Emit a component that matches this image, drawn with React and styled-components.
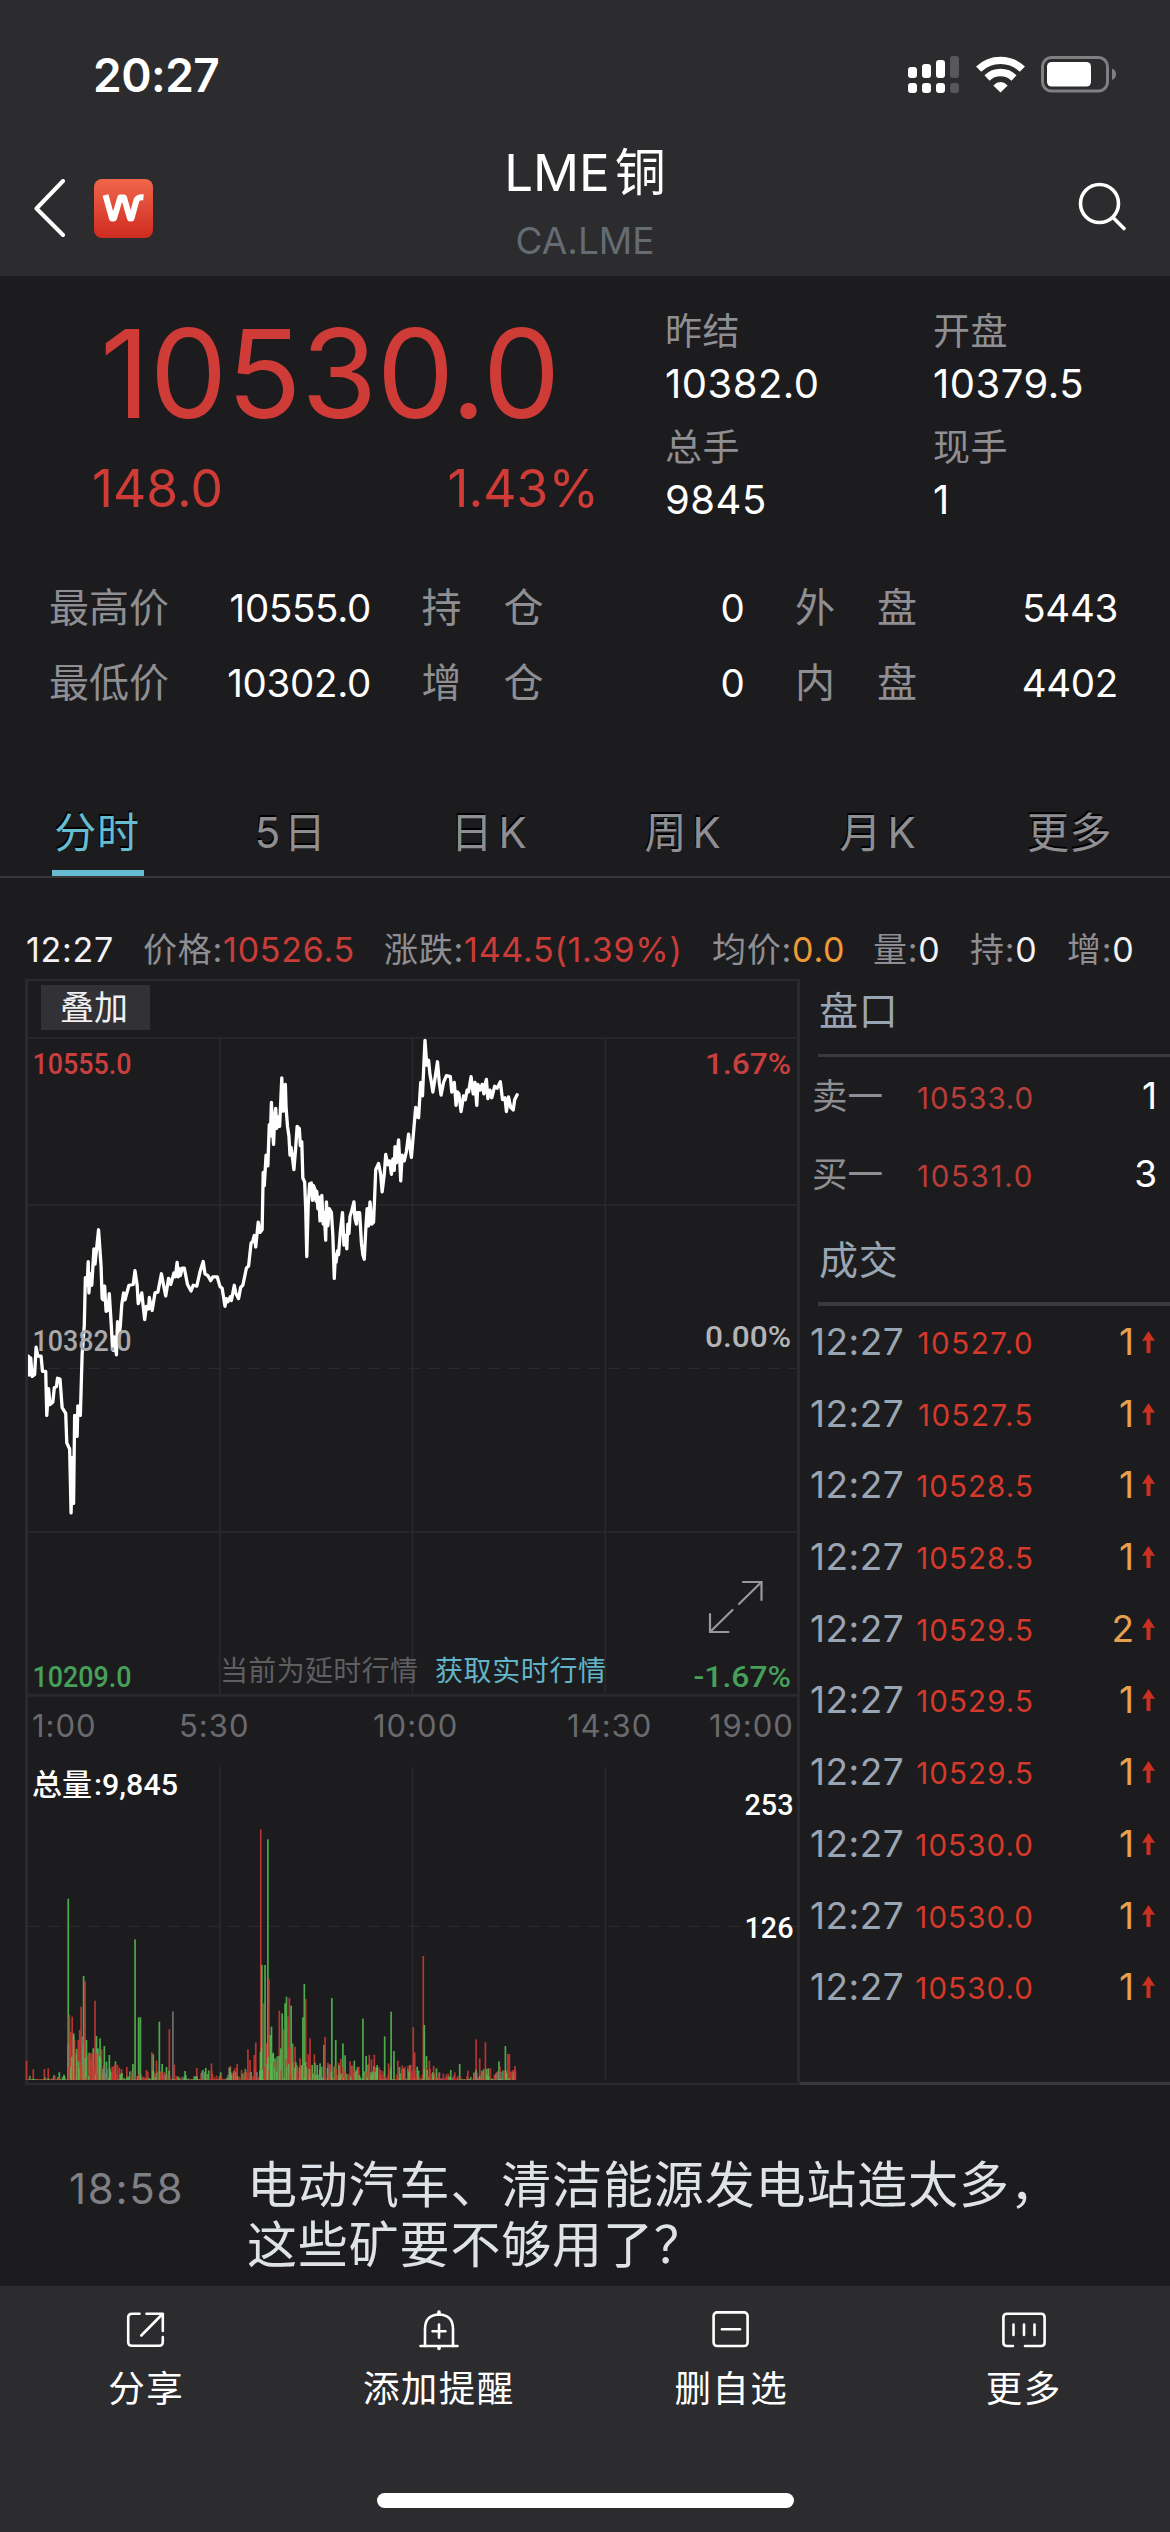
import React from 'react';
import styled, { createGlobalStyle } from 'styled-components';

const GlobalStyle = createGlobalStyle`
  * { box-sizing: border-box; }
  body {
    margin: 0;
    background: #1c1c1e;
    font-family: Inter, "Noto Sans CJK SC", sans-serif;
    color: #fff;
  }
  svg { display: block; }
`;

const C = {
  red: '#cf3b36',
  grey: '#8e8e93',
  dim: '#6a6a6e',
  teal: '#66bcd0',
  slate: '#9aa5b4',
  green: '#46a05a',
  grid: '#29292f',
  bar: '#2c2c2e',
};

const Screen = styled.div`
  width: 1170px;
  height: 2532px;
  overflow: hidden;
  background: #1c1c1e;
  display: flex;
  flex-direction: column;
  white-space: nowrap;
`;

/* ---------- header ---------- */
const Header = styled.header`
  flex: none;
  height: 276px;
  background: ${C.bar};
`;
const StatusBar = styled.div`
  height: 130px;
  padding: 19px 53px 0 93px;
  display: flex;
  align-items: center;
  justify-content: space-between;
`;
const Clock = styled.time`
  font-size: 46px;
  font-weight: 600;
  line-height: 60px;
  letter-spacing: -0.5px;
`;
const StatusIcons = styled.div`
  display: flex;
  align-items: center;
  gap: 16px;
`;
const NavBar = styled.div`
  height: 146px;
  padding: 0 42px 0 34px;
  display: grid;
  grid-template-columns: 300px 1fr 292px;
`;
const NavLeft = styled.div`
  display: flex;
  align-items: center;
  padding-top: 9px;
  gap: 28px;
`;
const NavRight = styled.div`
  display: flex;
  align-items: center;
  justify-content: flex-end;
  padding-top: 6px;
`;
const NavTitle = styled.div`
  padding-top: 12px;
  text-align: center;
`;
const Title = styled.h1`
  margin: 0;
  display: flex;
  justify-content: center;
  gap: 5px;
  font-size: 51px;
  font-weight: 400;
  line-height: 61px;
`;
const Code = styled.div`
  font-size: 37px;
  line-height: 75px;
  color: #656b73;
`;

/* ---------- quote ---------- */
const Quote = styled.section`
  flex: none;
  height: 294px;
  display: grid;
  grid-template-columns: 665px 268px 1fr;
`;
const PriceBlock = styled.div`
  padding: 36px 66px 0 92px;
  color: ${C.red};
`;
const Price = styled.div`
  padding-left: 8px;
  font-size: 123px;
  line-height: 124px;
  letter-spacing: -0.4px;
`;
const Change = styled.div`
  display: flex;
  justify-content: space-between;
  font-size: 51.5px;
  line-height: 105px;
`;
const FigureColumn = styled.dl`
  margin: 0;
  padding-top: 29px;
`;
const Figure = styled.div`
  height: 115.5px;
`;
const FigureLabel = styled.dt`
  font-size: 37px;
  line-height: 53px;
  height: 52px;
  letter-spacing: 0.5px;
  color: ${C.grey};
`;
const FigureValue = styled.dd`
  margin: 0;
  font-size: 40px;
  line-height: 54px;
  letter-spacing: 0.5px;
`;
const Stats = styled.section`
  flex: none;
  height: 150px;
  padding: 0 52px 0 49px;
  display: grid;
  grid-template-columns: 322px 323px 323px;
  justify-content: space-between;
  grid-auto-rows: 75px;
`;
const Stat = styled.div`
  display: flex;
  justify-content: space-between;
  align-items: center;
`;
const StatLabel = styled.span`
  display: flex;
  gap: ${(p) => (p.$wide ? 42 : 1)}px;
  font-size: 40px;
  line-height: 72px;
  color: ${C.grey};
`;
const StatValue = styled.span`
  font-size: 38.5px;
  line-height: 78px;
  letter-spacing: -0.3px;
`;

/* ---------- tabs ---------- */
const Tabs = styled.nav`
  flex: none;
  height: 90px;
  margin-top: 68px;
  display: grid;
  grid-template-columns: repeat(6, 195px);
  border-bottom: 2px solid #38383b;
`;
const Tab = styled.div`
  display: flex;
  justify-content: center;
  padding-top: 6px;
  font-size: 42px;
  line-height: 77px;
  letter-spacing: ${(p) => p.$spacing}px;
  color: ${(p) => (p.$active ? C.teal : C.grey)};
  text-shadow: -1px -2px 0 #000;
`;
const TabText = styled.span`
  height: 82px;
  margin-left: ${(p) => p.$inset}px;
  padding: 0 4px 0 2px;
  border-bottom: 6px solid ${(p) => (p.$active ? C.teal : 'transparent')};
`;

/* ---------- readout ---------- */
const Readout = styled.div`
  flex: none;
  height: 101px;
  padding: 42px 0 0 26px;
  display: grid;
  grid-template-columns: 117px 241px 328px 161px 97px 97px auto;
  font-size: 34px;
  line-height: 59px;
  letter-spacing: 0.75px;
  color: ${C.grey};
`;
const ReadoutValue = styled.span`
  color: ${(p) => p.$color || '#f2f2f4'};
`;

/* ---------- chart + depth ---------- */
const Market = styled.section`
  flex: none;
  height: 1105px;
  display: grid;
  grid-template-columns: 800px 1fr;
`;
const ChartPanel = styled.div`
  margin-left: 25px;
  border: 3px solid ${C.grid};
  border-top-width: 2px;
  border-bottom-width: 2px;
`;
const OverlayBar = styled.div`
  height: 56px;
  padding: 4px 0 0 13px;
`;
const OverlayButton = styled.button`
  display: block;
  width: 109px;
  height: 45px;
  padding: 0 3px 0 0;
  border: 0;
  background: #313136;
  color: #f0f0f2;
  font: inherit;
  font-size: 34px;
  line-height: 43px;
  text-align: center;
`;
const TimeAxis = styled.div`
  height: 69px;
  padding-left: 4px;
  display: grid;
  grid-template-columns: 147px 194px 194px 142px auto;
  font-size: 31px;
  line-height: 58px;
  letter-spacing: 1px;
  color: ${C.dim};
`;
const Depth = styled.aside`
  border-bottom: 3px solid #3a3a3c;
`;
const DepthTitle = styled.h2`
  margin: 0 0 0 18px;
  padding-left: 1px;
  height: ${(p) => p.$height}px;
  border-bottom: ${(p) => p.$rule}px solid #3a3a3c;
  font-size: 39px;
  font-weight: 400;
  line-height: ${(p) => p.$line}px;
  letter-spacing: 0.8px;
  color: ${C.slate};
`;
const OrderRow = styled.div`
  height: 78px;
  padding: 0 13px 0 12px;
  display: grid;
  grid-template-columns: 82px 140px 1fr;
  line-height: 78px;
`;
const OrderSide = styled.span`
  font-size: 35.5px;
  line-height: 80px;
  color: ${C.grey};
`;
const DepthPrice = styled.span`
  font-size: 29.5px;
  line-height: inherit;
  padding-top: ${(p) => p.$drop}px;
  text-align: right;
  letter-spacing: ${(p) => p.$spacing}px;
  color: ${(p) => p.$color};
`;
const OrderQty = styled.span`
  font-size: 37px;
  text-align: right;
`;
const TradeRow = styled.div`
  height: 71.7px;
  padding: 0 15px 0 10px;
  display: grid;
  grid-template-columns: 94px 130px 1fr 13px;
  line-height: 71px;
`;
const TradeTime = styled.span`
  font-size: 37px;
  letter-spacing: 0.5px;
  color: ${C.slate};
`;
const TradeQty = styled.span`
  padding-right: 8px;
  font-size: 37px;
  text-align: right;
  color: #e8a04e;
`;
const ArrowSlot = styled.span`
  display: flex;
  align-items: center;
`;

/* ---------- news + actions ---------- */
const News = styled.article`
  flex: 1;
  padding: 72px 0 0 69px;
  display: grid;
  grid-template-columns: 178px 1fr;
  align-items: start;
`;
const NewsTime = styled.time`
  font-size: 42px;
  line-height: 66px;
  letter-spacing: 1.7px;
  color: #7f7f84;
`;
const NewsTitle = styled.p`
  margin: 0;
  font-size: 50px;
  line-height: 59.5px;
  letter-spacing: 0.85px;
  color: #dfe2e6;
`;
const Actions = styled.footer`
  flex: none;
  height: 246px;
  background: ${C.bar};
  display: flex;
  flex-direction: column;
  align-items: center;
`;
const ActionRow = styled.div`
  width: 100%;
  height: 207px;
  display: flex;
`;
const Action = styled.div`
  flex: 1;
  padding-top: 20px;
  display: flex;
  flex-direction: column;
  align-items: center;
  font-size: 36.5px;
  line-height: 71px;
  letter-spacing: 1.4px;
`;
const HomeIndicator = styled.div`
  width: 417px;
  height: 15px;
  border-radius: 8px;
  background: #fff;
`;

/* ---------- icons ---------- */
const SignalIcon = () => (
  <svg width="52" height="38" viewBox="0 0 52 38" fill="#fff">
    {[[0, 11], [14, 8], [28, 4]].map(([x, y]) => (
      <g key={x}>
        <rect x={x} y={y} width="9" height={22 - y} rx="3" />
        <rect x={x} y="27" width="9" height="10" rx="3" />
      </g>
    ))}
    <g fill="#58585a">
      <rect x="42" y="0" width="9" height="22" rx="3" />
      <rect x="42" y="27" width="9" height="10" rx="3" />
    </g>
  </svg>
);
const WifiIcon = () => (
  <svg width="49" height="37" viewBox="0 0 49 37">
    <g fill="none" stroke="#fff" strokeWidth="7.4">
      <path d="M2.6 13.2 A31.5 31.5 0 0 1 46.4 13.2" />
      <path d="M11 22 A19.5 19.5 0 0 1 38 22" />
    </g>
    <path d="M24.5 36.5 L17.3 29.4 Q24.5 22.6 31.7 29.4 Z" fill="#fff" />
  </svg>
);
const BatteryIcon = () => (
  <svg width="76" height="37" viewBox="0 0 76 37">
    <rect x="1.5" y="1.5" width="65" height="33.5" rx="9" fill="none" stroke="#808082" strokeWidth="3" />
    <rect x="6" y="6" width="44" height="24.5" rx="4.5" fill="#fff" />
    <path d="M71 12.5 Q75 14 75 18.3 Q75 22.5 71 24 Z" fill="#808082" />
  </svg>
);
const BackIcon = () => (
  <svg width="31" height="60" viewBox="0 0 31 60" fill="none" stroke="#fff" strokeWidth="4" strokeLinecap="round" strokeLinejoin="round">
    <path d="M29 2 L2.5 29.5 L29 56" />
  </svg>
);
const AppLogo = () => (
  <svg width="60" height="60" viewBox="0 0 60 60">
    <defs>
      <linearGradient id="logoFill" x1="0" y1="0" x2="0" y2="1">
        <stop offset="0" stopColor="#f0674b" />
        <stop offset="1" stopColor="#cf2b20" />
      </linearGradient>
    </defs>
    <rect x="1" y="0" width="59" height="59" rx="8" fill="url(#logoFill)" />
    <path d="M12.5 16 L19 39.5 L21 39.5 L27.3 18.5 L31 18.5 L37 39.5 L38.5 39.5 L43.5 21 Q44.8 17.8 50.5 18.2" fill="none" stroke="#fff" strokeWidth="6" strokeLinejoin="round" />
  </svg>
);
const SearchIcon = () => (
  <svg width="50" height="50" viewBox="0 0 50 50" fill="none" stroke="#fff" strokeWidth="3.6" strokeLinecap="round">
    <circle cx="21.5" cy="21.5" r="19" />
    <path d="M35.5 36 L46 46.5" />
  </svg>
);
const ExpandIcon = () => (
  <g fill="none" stroke="#99999b" strokeWidth="2.2" strokeLinecap="round">
    <path d="M743 1582 H761.5 V1600" />
    <path d="M761 1582.5 L739 1604" />
    <path d="M710 1614 V1632 H728.5" />
    <path d="M710.5 1631.5 L732.5 1610" />
  </g>
);
const UpArrow = () => (
  <svg width="13" height="23" viewBox="0 0 13 23" fill="#cc301f">
    <path d="M6.5 0 L13 10 L8.5 9.4 V22 H4.5 V9.4 L0 10 Z" />
  </svg>
);

const actionStroke = { fill: 'none', stroke: '#fff', strokeWidth: 2.6, strokeLinecap: 'round', strokeLinejoin: 'round' };
const ShareIcon = () => (
  <svg width="44" height="48" viewBox="0 0 44 48" {...actionStroke}>
    <path d="M15.5 7.7 H8 Q4.2 7.7 4.2 11.5 V36 Q4.2 39.8 8 39.8 H35 Q38.8 39.8 38.8 36 V31" />
    <path d="M22.5 7.7 H38.8 V25" />
    <path d="M38 8.5 L17.3 29.5" />
  </svg>
);
const BellIcon = () => (
  <svg width="44" height="48" viewBox="0 0 44 48" {...actionStroke}>
    <path d="M3.5 40 H40.5" />
    <path d="M8 40 V23 Q8 9 22 8.5 Q36 9 36 23 V40" />
    <path d="M22 8 V6 M22 41 V42.5" strokeWidth="3.6" />
    <path d="M15.5 25.3 H28.5 M22 18.5 V31.8" />
  </svg>
);
const RemoveIcon = () => (
  <svg width="44" height="48" viewBox="0 0 44 48" {...actionStroke}>
    <rect x="4.6" y="6.4" width="34" height="33.6" rx="3.5" />
    <path d="M13 23.3 H31" />
  </svg>
);
const MoreIcon = () => (
  <svg width="48" height="48" viewBox="0 0 48 48" {...actionStroke}>
    <path d="M13 40 H7 Q3.4 40 3.4 36.5 V11.3 Q3.4 7.8 7 7.8 H41 Q44.6 7.8 44.6 11.3 V36.5 Q44.6 40 41 40 H25" />
    <path d="M13.5 18.5 V29 M24 18.5 V29 M34.5 18.5 V29" />
  </svg>
);

/* ---------- chart data ---------- */
const PRICE_LINE = `80,1035 82,1085 86,1040 90,1088 97,1083 101,1012 106,1035 115,1035 119,1075 128,1075 131,1190 136,1120 140,1162 148,1155 152,1118 158,1115 161,1093 168,1095 174,1170 184,1185 187,1262 195,1278 199,1445 203,1300 206,1420 209,1190 216,1245 218,1165 225,1190 230,1030 236,955 239,830 244,850 247,788 249,870 253,820 257,850 263,755 266,795 276,705 283,800 286,885 289,888 293,852 297,918 303,915 306,872 312,960 315,1015 317,1020 320,985 326,1032 329,945 333,985 337,955 341,900 346,870 350,888 361,850 373,848 378,812 384,850 387,898 397,870 405,940 410,905 416,912 418,882 426,916 434,870 442,868 452,820 458,850 464,878 472,832 478,848 487,818 491,828 496,790 499,828 501,805 505,825 510,805 516,805 525,848 535,865 541,850 551,852 560,815 569,788 574,820 582,825 590,838 596,828 608,828 616,853 622,858 630,905 634,885 638,893 645,880 648,890 656,850 660,870 668,885 674,855 680,850 690,805 696,800 703,740 708,735 712,720 716,750 723,685 728,712 734,705 737,555 740,590 745,510 750,538 754,430 757,460 760,372 763,440 766,482 769,410 772,388 775,440 779,410 783,435 789,308 793,395 796,330 799,325 801,385 805,435 809,460 812,510 815,490 818,510 823,548 828,490 832,435 838,440 841,485 845,475 848,570 853,580 856,650 859,775 863,640 867,585 872,583 875,628 878,590 882,600 885,630 887,605 890,650 893,620 896,682 901,615 905,690 908,660 912,732 914,632 918,695 922,650 928,660 932,720 936,832 939,770 941,790 945,760 948,770 953,710 959,660 963,745 967,720 971,755 974,690 977,715 980,670 985,655 991,632 994,675 998,690 1000,660 1007,660 1012,740 1016,770 1020,782 1025,690 1028,650 1032,695 1036,632 1041,690 1046,685 1049,620 1052,548 1060,532 1066,560 1070,606 1076,560 1080,508 1086,535 1091,525 1096,560 1100,520 1104,550 1106,488 1110,530 1116,470 1119,520 1122,577 1126,510 1132,525 1138,500 1144,455 1148,490 1152,516 1157,460 1164,385 1168,410 1172,412 1178,320 1183,355 1187,270 1190,210 1195,275 1200,262 1204,300 1208,320 1212,345 1218,310 1225,266 1230,320 1235,353 1242,320 1250,302 1261,305 1265,345 1272,320 1277,380 1281,345 1285,350 1291,396 1298,355 1303,365 1308,340 1312,345 1319,305 1325,350 1330,320 1335,380 1338,325 1344,340 1350,325 1355,350 1358,325 1362,312 1366,362 1372,340 1377,360 1385,330 1392,335 1401,318 1407,365 1414,360 1418,396 1424,358 1430,385 1437,392 1441,365 1448,352`;

const VOLUME = [
  [74, 1262, 'r'], [93, 1288, 'r'], [124, 1287, 'r'], [135, 1285, 'r'], [166, 1297, 'g'], [179, 1304, 'g'],
  [191, 776, 'g'], [194, 1125, 'r'], [198, 1175, 'r'], [202, 1130, 'r'], [206, 1180, 'g'], [214, 1240, 'n'],
  [219, 1200, 'r'], [223, 1170, 'r'], [227, 1100, 'r'], [230, 1190, 'n'], [234, 1008, 'g'], [238, 1024, 'r'], [242, 1200, 'g'],
  [250, 1238, 'g'], [256, 1240, 'r'], [261, 1225, 'g'], [266, 1082, 'r'], [270, 1188, 'g'], [274, 1225, 'g'], [280, 1195, 'g'],
  [284, 1228, 'r'], [292, 1218, 'g'], [298, 1265, 'g'], [306, 1245, 'g'], [314, 1280, 'r'], [323, 1264, 'g'], [334, 1283, 'r'],
  [340, 1288, 'r'], [355, 1281, 'r'], [372, 1272, 'g'], [378, 898, 'g'], [388, 1132, 'g'], [393, 1132, 'g'], [410, 1290, 'r'],
  [425, 1237, 'r'], [429, 1243, 'g'], [438, 1262, 'r'], [446, 1145, 'g'], [454, 1272, 'g'], [466, 1281, 'g'], [474, 1168, 'r'],
  [484, 1114, 'n'], [488, 1274, 'r'], [518, 1293, 'g'], [551, 1284, 'r'], [568, 1290, 'g'], [576, 1284, 'g'], [592, 1270, 'r'],
  [618, 1297, 'g'], [645, 1278, 'r'], [664, 1272, 'r'], [694, 1228, 'r'], [700, 1260, 'r'], [712, 1245, 'r'], [716, 1207, 'r'],
  [730, 568, 'r'], [733, 975, 'g'], [738, 1090, 'r'], [742, 975, 'g'], [746, 1210, 'r'], [750, 598, 'g'], [753, 1018, 'r'],
  [757, 1185, 'g'], [760, 1160, 'g'], [765, 1238, 'g'], [770, 1255, 'g'], [782, 1112, 'r'], [786, 1225, 'g'], [790, 1120, 'g'],
  [794, 1168, 'r'], [798, 1090, 'g'], [802, 1070, 'g'], [806, 1130, 'r'], [810, 1074, 'r'], [815, 1097, 'g'], [820, 1265, 'r'],
  [826, 1220, 'r'], [832, 1275, 'r'], [840, 1255, 'r'], [848, 1132, 'g'], [852, 1032, 'g'], [856, 1077, 'r'], [863, 1243, 'r'],
  [868, 1195, 'r'], [874, 1275, 'g'], [880, 1243, 'r'], [888, 1275, 'g'], [896, 1270, 'g'], [907, 1215, 'g'], [910, 1191, 'r'],
  [918, 1268, 'r'], [929, 1074, 'g'], [940, 1200, 'g'], [948, 1268, 'r'], [954, 1256, 'r'], [960, 1210, 'g'], [966, 1246, 'g'],
  [980, 1264, 'r'], [992, 1262, 'g'], [1004, 1280, 'r'], [1016, 1136, 'g'], [1025, 1248, 'g'], [1034, 1245, 'r'], [1040, 1258, 'r'],
  [1048, 1244, 'r'], [1056, 1275, 'g'], [1066, 1290, 'r'], [1077, 1189, 'g'], [1088, 1270, 'r'], [1095, 1115, 'g'], [1103, 1233, 'g'],
  [1114, 1262, 'r'], [1126, 1286, 'r'], [1142, 1287, 'g'], [1157, 1162, 'r'], [1161, 1237, 'r'], [1168, 1280, 'g'], [1185, 948, 'r'],
  [1188, 1155, 'g'], [1194, 1248, 'g'], [1202, 1262, 'r'], [1214, 1278, 'r'], [1222, 1285, 'g'], [1262, 1290, 'g'], [1287, 1272, 'g'],
  [1310, 1292, 'r'], [1333, 1198, 'r'], [1343, 1255, 'r'], [1359, 1207, 'r'], [1367, 1285, 'r'], [1397, 1264, 'g'], [1400, 1280, 'r'],
  [1415, 1218, 'g'], [1422, 1242, 'r'], [1426, 1242, 'r'], [1436, 1290, 'r'], [1442, 1278, 'r'],
];
/* [from, to, tallest, emptyShare]: low background turnover between the listed peaks */
const QUIET = [
  [78, 188, 14, 0.7], [190, 245, 130, 0.05], [246, 285, 78, 0.05], [286, 330, 50, 0.1], [331, 374, 26, 0.3],
  [375, 402, 26, 0.1], [403, 478, 30, 0.25], [480, 540, 12, 0.6], [541, 600, 26, 0.35], [601, 640, 14, 0.5],
  [641, 728, 36, 0.1], [729, 775, 100, 0.03], [776, 822, 120, 0.03], [823, 870, 62, 0.05], [871, 970, 56, 0.05],
  [971, 1050, 48, 0.08], [1051, 1125, 38, 0.1], [1126, 1205, 44, 0.1], [1206, 1290, 22, 0.15], [1291, 1326, 12, 0.5],
  [1327, 1380, 36, 0.08], [1381, 1444, 34, 0.1],
];
const filler = (() => {
  const out = [];
  let seed = 7;
  const rnd = () => {
    seed = (seed * 16807) % 2147483647;
    return seed / 2147483647;
  };
  QUIET.forEach(([from, to, tall, empty]) => {
    for (let x = from; x <= to; x += 2.7) {
      const skip = rnd() < empty;
      const h = 3 + Math.pow(rnd(), 1.4) * tall;
      const c = rnd() < 0.52 ? 'r' : rnd() < 0.93 ? 'g' : 'n';
      out.push([x, 1320 - (skip ? 2.5 : h), c]);
    }
  });
  return out;
})();
const VOL_COLOR = { r: '#d03a34', g: '#56c254', n: '#7d7d80' };
const toBar = ([x, top, kind]) => ({ x: x / 2.8 - 0.8, y: 1640 + top / 3, h: (1320 - top) / 3, fill: VOL_COLOR[kind] });

const Bars = ({ data, opacity }) => data.map((p, i) => {
  const b = toBar(p);
  return <rect key={i} x={b.x} y={b.y} width="1.7" height={b.h} fill={b.fill} opacity={opacity} />;
});

const Scale = styled.text`
  font-family: Roboto, sans-serif;
  font-weight: 500;
  font-size: 30px;
  fill: ${(p) => p.$color};
`;
const Note = styled.text`
  font-family: "Noto Sans CJK SC", sans-serif;
  font-size: 28px;
  fill: ${(p) => p.$color};
`;
const VolumeCaption = styled.text`
  font-size: 30px;
  font-weight: 500;
  fill: #fff;
`;
const VolumeSvg = styled.svg`
  margin-left: -3px;
`;
const Label = ({ x, y, w, color, children }) => (
  <Scale x={x} y={y} textLength={w} lengthAdjust="spacingAndGlyphs" $color={color}>{children}</Scale>
);
const VLINES = [219.8, 412.5, 605.3];

const PriceChart = () => (
  <svg width="769" height="660" viewBox="28 1037 769 660">
    <g stroke={C.grid} strokeWidth="1.6">
      <path d="M28 1038 H797 M28 1205 H797 M28 1532 H797" />
      <path d="M28 1368.3 H797" strokeDasharray="12 8" strokeWidth="1.3" />
      {VLINES.map((x) => <path key={x} d={`M${x} 1038 V1695`} />)}
      <path d="M28 1695.3 H797" strokeWidth="3" />
    </g>
    <g transform="translate(0 960) scale(0.35714 0.38265)">
      <polyline points={PRICE_LINE} fill="none" stroke="#fff" strokeWidth="3.3" strokeLinejoin="round" strokeLinecap="round" vectorEffect="non-scaling-stroke" />
    </g>
    <Label x={32.5} y={1073.5} w={99} color="#c93f3e">10555.0</Label>
    <Label x={32.5} y={1350.5} w={99} color="#a9a9ab">10382.0</Label>
    <Label x={32.5} y={1687} w={99} color={C.green}>10209.0</Label>
    <Label x={705} y={1073.5} w={86} color="#c93f3e">1.67%</Label>
    <Label x={705} y={1347} w={86} color="#b4b4b6">0.00%</Label>
    <Label x={693.5} y={1686.5} w={97.5} color={C.green}>-1.67%</Label>
    <Note x="220" y="1680.5" textLength="198" $color="#5f5f62">当前为延时行情</Note>
    <Note x="435" y="1680.5" textLength="171" $color="#62b4c8">获取实时行情</Note>
    <ExpandIcon />
  </svg>
);

const VolumeChart = () => (
  <VolumeSvg width="772" height="317" viewBox="25 1766 772 317">
    <g stroke={C.grid} strokeWidth="1.6">
      <path d="M28 1926.3 H797" strokeDasharray="12 8" strokeWidth="1.3" />
      {VLINES.map((x) => <path key={x} d={`M${x} 1767 V2080`} />)}
    </g>
    <Bars data={VOLUME} opacity={0.85} />
    <Bars data={filler} opacity={0.75} />
    <VolumeCaption x="32" y="1794.5" textLength="60">总量</VolumeCaption>
    <Label x={94} y={1795} w={84} color="#fff">:9,845</Label>
    <Label x={744.5} y={1814.5} w={49} color="#fff">253</Label>
    <Label x={744.5} y={1938} w={49} color="#fff">126</Label>
  </VolumeSvg>
);

/* ---------- content ---------- */
const STATS = [
  [['最高价'], '10555.0'], [['持', '仓'], '0'], [['外', '盘'], '5443'],
  [['最低价'], '10302.0'], [['增', '仓'], '0'], [['内', '盘'], '4402'],
];
/* name, letter spacing, left inset */
const TABS = [['分时', 0.8, 1], ['5日', 3.5, 1], ['日K', 6, 10], ['周K', 6, 8], ['月K', 6, 8], ['更多', 0.6, -4]];
const TRADES = [
  ['10527.0', 1], ['10527.5', 1], ['10528.5', 1], ['10528.5', 1], ['10529.5', 2],
  ['10529.5', 1], ['10529.5', 1], ['10530.0', 1], ['10530.0', 1], ['10530.0', 1],
];
const FIGURES = [
  [['昨结', '10382.0'], ['总手', '9845']],
  [['开盘', '10379.5'], ['现手', '1']],
];
const ACTIONS = [['分享', ShareIcon], ['添加提醒', BellIcon], ['删自选', RemoveIcon], ['更多', MoreIcon]];

export default function App() {
  return (
    <Screen>
      <GlobalStyle />
      <Header>
        <StatusBar>
          <Clock>20:27</Clock>
          <StatusIcons><SignalIcon /><WifiIcon /><BatteryIcon /></StatusIcons>
        </StatusBar>
        <NavBar>
          <NavLeft><BackIcon /><AppLogo /></NavLeft>
          <NavTitle>
            <Title><span>LME</span><span>铜</span></Title>
            <Code>CA.LME</Code>
          </NavTitle>
          <NavRight><SearchIcon /></NavRight>
        </NavBar>
      </Header>

      <Quote>
        <PriceBlock>
          <Price>10530.0</Price>
          <Change><span>148.0</span><span>1.43%</span></Change>
        </PriceBlock>
        {FIGURES.map((col, i) => (
          <FigureColumn key={i}>
            {col.map(([label, value]) => (
              <Figure key={label}>
                <FigureLabel>{label}</FigureLabel>
                <FigureValue>{value}</FigureValue>
              </Figure>
            ))}
          </FigureColumn>
        ))}
      </Quote>

      <Stats>
        {STATS.map(([label, value]) => (
          <Stat key={label.join('')}>
            <StatLabel $wide={label.length > 1}>{label.map((ch) => <span key={ch}>{ch}</span>)}</StatLabel>
            <StatValue>{value}</StatValue>
          </Stat>
        ))}
      </Stats>

      <Tabs>
        {TABS.map(([name, spacing, inset], i) => (
          <Tab key={name} $active={i === 0} $spacing={spacing}>
            <TabText $active={i === 0} $inset={inset}>{name}</TabText>
          </Tab>
        ))}
      </Tabs>

      <Readout>
        <ReadoutValue>12:27</ReadoutValue>
        <span>价格:<ReadoutValue $color="#c93c38">10526.5</ReadoutValue></span>
        <span>涨跌:<ReadoutValue $color="#c93c38">144.5(1.39%)</ReadoutValue></span>
        <span>均价:<ReadoutValue $color="#f09a37">0.0</ReadoutValue></span>
        <span>量:<ReadoutValue>0</ReadoutValue></span>
        <span>持:<ReadoutValue>0</ReadoutValue></span>
        <span>增:<ReadoutValue>0</ReadoutValue></span>
      </Readout>

      <Market>
        <ChartPanel>
          <OverlayBar><OverlayButton>叠加</OverlayButton></OverlayBar>
          <PriceChart />
          <TimeAxis>
            <span>1:00</span><span>5:30</span><span>10:00</span><span>14:30</span><span>19:00</span>
          </TimeAxis>
          <VolumeChart />
        </ChartPanel>
        <Depth>
          <DepthTitle $height={78} $rule={3} $line={63}>盘口</DepthTitle>
          <OrderRow>
            <OrderSide>卖一</OrderSide>
            <DepthPrice $color="#b83c38" $spacing={0.9} $drop={2}>10533.0</DepthPrice>
            <OrderQty>1</OrderQty>
          </OrderRow>
          <OrderRow>
            <OrderSide>买一</OrderSide>
            <DepthPrice $color="#b83c38" $spacing={1.7} $drop={2}>10531.0</DepthPrice>
            <OrderQty>3</OrderQty>
          </OrderRow>
          <DepthTitle $height={93} $rule={4} $line={94}>成交</DepthTitle>
          {TRADES.map(([price, qty], i) => (
            <TradeRow key={i}>
              <TradeTime>12:27</TradeTime>
              <DepthPrice $color="#d6382a" $spacing={price.includes('27') ? 1.5 : 1.1} $drop={2}>{price}</DepthPrice>
              <TradeQty>{qty}</TradeQty>
              <ArrowSlot><UpArrow /></ArrowSlot>
            </TradeRow>
          ))}
        </Depth>
      </Market>

      <News>
        <NewsTime>18:58</NewsTime>
        <NewsTitle>电动汽车、清洁能源发电站造太多，<br />这些矿要不够用了？</NewsTitle>
      </News>

      <Actions>
        <ActionRow>
          {ACTIONS.map(([label, Icon]) => (
            <Action key={label}><Icon />{label}</Action>
          ))}
        </ActionRow>
        <HomeIndicator />
      </Actions>
    </Screen>
  );
}
